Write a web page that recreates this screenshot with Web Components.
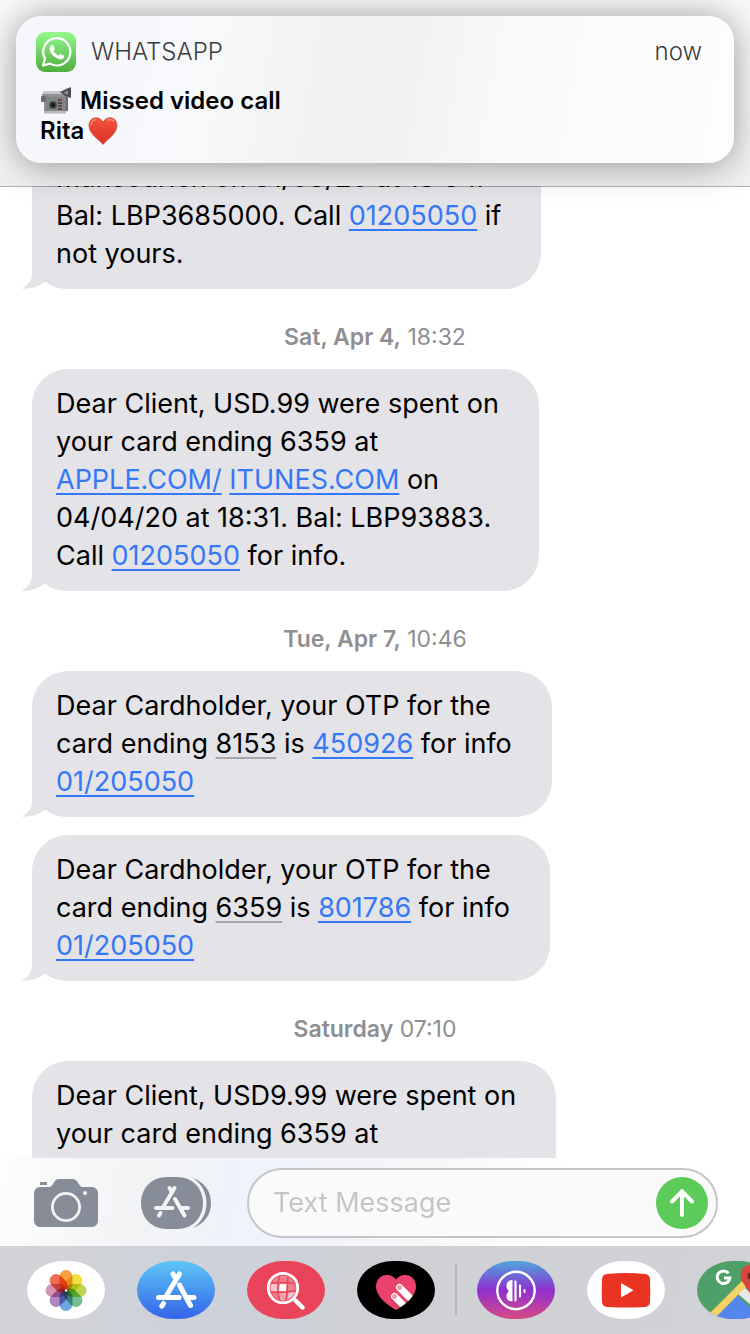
<!DOCTYPE html>
<html lang="en">
<head>
<meta charset="utf-8">
<meta name="viewport" content="width=device-width, initial-scale=1">
<title>Messages</title>
<style>
  html, body {
    margin: 0;
    height: 100%;
    overflow: hidden;
    background: #fff;
    font-family: Inter, "Liberation Sans", sans-serif;
  }
</style>
</head>
<body>

<message-screen>
  <app-banner slot="banner" app="WHATSAPP" time="now">
    <missed-call></missed-call>
  </app-banner>

  <message-bubble>
    Mansourieh on 31/03/20 at 18:34.<br>
    Bal: LBP3685000. Call <message-link href="tel:01205050">01205050</message-link> if<br>
    not yours.
  </message-bubble>

  <date-label day="Sat, Apr 4,">18:32</date-label>
  <message-bubble>
    Dear Client, USD.99 were spent on<br>
    your card ending 6359 at<br>
    <message-link href="#apple">APPLE.COM/</message-link> <message-link href="#itunes">ITUNES.COM</message-link> on<br>
    04/04/20 at 18:31. Bal: LBP93883.<br>
    Call <message-link href="tel:01205050">01205050</message-link> for info.
  </message-bubble>

  <date-label day="Tue, Apr 7,">10:46</date-label>
  <message-bubble>
    Dear Cardholder, your OTP for the<br>
    card ending <message-link muted href="#code">8153</message-link> is <message-link href="#code">450926</message-link> for info<br>
    <message-link href="tel:01205050">01/205050</message-link>
  </message-bubble>
  <message-bubble follows>
    Dear Cardholder, your OTP for the<br>
    card ending <message-link muted href="#code">6359</message-link> is <message-link href="#code">801786</message-link> for info<br>
    <message-link href="tel:01205050">01/205050</message-link>
  </message-bubble>

  <date-label day="Saturday">07:10</date-label>
  <message-bubble>
    Dear Client, USD9.99 were spent on<br>
    your card ending 6359 at<br>
    <br>
  </message-bubble>

  <message-composer slot="footer"></message-composer>
  <app-drawer slot="footer"></app-drawer>
</message-screen>

<script>
// Small helper: every element gets an open shadow root with its own markup
class BaseElement extends HTMLElement {
  constructor() {
    super();
    this.attachShadow({ mode: 'open' });
  }

  connectedCallback() {
    this.shadowRoot.innerHTML = this.render();
  }
}

class MessageScreen extends BaseElement {
  render() {
    return `
      <style>
        :host {
          position: relative;
          display: flex;
          flex-direction: column;
          height: 100vh;
          overflow: hidden;
        }
        /* the bar floats over the scrolled thread */
        header {
          position: absolute;
          inset: 0 0 auto 0;
          z-index: 1;
          box-sizing: border-box;
          height: 187px;
          padding: 16px;
          background: linear-gradient(#f9f9f9 60%, #f0f0f0);
          background-clip: padding-box;
          border-bottom: 1px solid rgba(0, 0, 0, .3);
        }
        main {
          flex: 1;
          min-height: 0;
          overflow: hidden;
          display: flex;
          flex-direction: column;
          padding: 143px 32px 0;
        }
        footer { position: relative; z-index: 2; }
      </style>
      <header><slot name="banner"></slot></header>
      <main><slot></slot></main>
      <footer><slot name="footer"></slot></footer>
    `;
  }
}

class AppBanner extends BaseElement {
  render() {
    return `
      <style>
        :host {
          display: block;
          box-sizing: border-box;
          height: 147px;
          padding: 16px 32px 16px 20px;
          border-radius: 26px;
          background: linear-gradient(100deg, #f6f7fc 0%, #f7f8fa 28%, #f0f1f3 46%, #f1f2f4 54%, #f9f9fa 68%, #fcfdfd 100%);
          box-shadow: 0 2px 36px rgba(0, 0, 0, .4);
        }
        .head {
          display: flex;
          align-items: center;
          gap: 15px;
          font-size: 24px;
          font-weight: 300;
          line-height: 40px;
          color: #3c3c3e;
        }
        svg { display: block; }
        time { margin-left: auto; color: #3c3c3e; }
        .body { padding: 14px 4px 0; }
      </style>
      <div class="head">
        <svg width="40" height="40" viewBox="0 0 40 40" aria-hidden="true">
          <defs>
            <linearGradient id="wa" x1="0" y1="0" x2="0" y2="1">
              <stop offset="0" stop-color="#92fa8c"/>
              <stop offset="1" stop-color="#4fae3f"/>
            </linearGradient>
          </defs>
          <rect width="40" height="40" rx="9" fill="url(#wa)"/>
          <path d="M7 33.500 L9 26.600 A13.600 13.600 0 1 1 14 31.600 Z" fill="none" stroke="#fff" stroke-width="2.200" stroke-linejoin="round"/>
          <path d="M15.200 13.200c.5-.5 1.700-.6 2 .1l1.500 3.300c.3.800-1 1.900-1 2.500 1 2 2.600 3.400 4.600 4.300.8.200 1.600-1.800 2.300-1.500l3.100 1.500c.8.400.5 1.800-.1 2.600-1.200 1.300-3.200 1.500-4.900.9-4.500-1.500-7.400-4.500-8.700-8-.6-2.200-.1-4.400 1.200-5.700z" fill="#fff"/>
        </svg>
        <span>${this.getAttribute('app')}</span>
        <time>${this.getAttribute('time')}</time>
      </div>
      <div class="body"><slot></slot></div>
    `;
  }
}

class MissedCall extends BaseElement {
  render() {
    return `
      <style>
        :host {
          display: block;
          font-size: 24px;
          font-weight: 600;
          line-height: 30px;
          color: #000;
        }
        div { display: flex; align-items: center; }
        .title { gap: 8px; }
        .name { gap: 4px; }
      </style>
      <div class="title">
        <svg width="32" height="28" viewBox="0 0 32 28" role="img" aria-label="Movie camera">
          <path d="M3 4h19l6-3 2 1v8l-3-1-1 17H4V15H2V7h1z" fill="#8f9193"/>
          <path d="M3 4h19l4-2-1 5H3z" fill="#c3c5c7"/>
          <path d="M20 5l11-5v11l-6-2z" fill="#4c4d50"/>
          <path d="M23 6l5-2.500v4z" fill="#909294"/>
          <rect x="1" y="9" width="5" height="6" rx="1" fill="#696b6e"/>
          <rect x="6" y="10" width="20" height="14" fill="#808285"/>
          <rect x="4" y="24" width="22" height="2.500" fill="#b8b9bb"/>
          <circle cx="13" cy="18" r="4" fill="#515356"/>
          <circle cx="13" cy="18" r="2.500" fill="#1d1e20"/>
          <path d="M18 13h4M18 16h4M18 19h4M18 22h4" stroke="#3c3d3f" stroke-width="1.500"/>
          <path d="M20 13h1.500M20 19h1.500" stroke="#b0433e" stroke-width="1.500"/>
          <path d="M27 10v14" stroke="#6a6c6f" stroke-width="2"/>
        </svg>
        <span>Missed video call</span>
      </div>
      <div class="name">
        <span>Rita</span>
        <svg width="30" height="28" viewBox="0 0 30 28" role="img" aria-label="Red heart">
          <defs>
            <linearGradient id="ht" x1="0" y1="0" x2="0" y2="1">
              <stop offset="0" stop-color="#f3533d"/>
              <stop offset="1" stop-color="#d93226"/>
            </linearGradient>
          </defs>
          <path d="M15 27.500C13 24 1 17.500 1 8.500 1 4 4 .7 8 .7c3.300 0 5.800 2 7 4.600C16.200 2.700 18.700.7 22 .7c4 0 7 3.300 7 7.800C29 17.500 17 24 15 27.500z" fill="url(#ht)" stroke="#c9342a" stroke-width=".6"/>
          <path d="M3 8.500C3 5 5.300 2.700 8 2.700M19 3.500C21 2.200 24 2.500 26 4.500" fill="none" stroke="#ffa28f" stroke-width="1.600" opacity=".7"/>
        </svg>
      </div>
    `;
  }
}

class MessageBubble extends BaseElement {
  render() {
    return `
      <style>
        :host {
          position: relative;
          isolation: isolate;
          display: block;
          flex: none;
          align-self: flex-start;
          padding: 16px 40px 16px 24px;
          border-radius: 36px;
          background: #e4e3e8;
          color: #000;
          font-size: 27px;
          line-height: 38px;
          white-space: nowrap;
        }
        :host([follows]) { margin-top: 18px; }
        /* tail sits behind the text */
        svg {
          position: absolute;
          left: -11px;
          bottom: 0;
          z-index: -1;
        }
      </style>
      <slot></slot>
      <svg width="50" height="36" viewBox="0 0 50 36" fill="#e4e3e8" aria-hidden="true">
        <path d="M11 0V19C11 27 7 33.500 0 35.600C9 36.500 19 33 24 28.500C30 33.500 38 36 49 36V0Z"/>
      </svg>
    `;
  }
}

class MessageLink extends BaseElement {
  render() {
    return `
      <style>
        :host { display: inline; }
        a {
          color: #3478f6;
          text-decoration: underline;
          text-decoration-thickness: 2px;
          text-underline-offset: 4px;
        }
        :host([muted]) a {
          color: #000;
          text-decoration-color: #a6a6aa;
        }
      </style><a href="${this.getAttribute('href')}"><slot></slot></a>`;
  }
}

class DateLabel extends BaseElement {
  render() {
    return `
      <style>
        :host {
          display: block;
          flex: none;
          padding: 33px 0 17px;
          font-size: 23px;
          line-height: 30px;
          text-align: center;
          color: #8e8e93;
        }
        b { font-weight: 600; }
      </style>
      <b>${this.getAttribute('day')}</b> <slot></slot>
    `;
  }
}

class MessageComposer extends BaseElement {
  render() {
    return `
      <style>
        :host {
          display: flex;
          align-items: center;
          padding: 10px 32px 8px 34px;
          background: linear-gradient(100deg, #fdfdfd 0%, #f2f3f5 20%, #eff3fb 34%, #f6f6f8 55%, #fff 75%);
        }
        button {
          display: block;
          flex: none;
          padding: 0;
          border: 0;
          background: none;
        }
        svg { display: block; }
        .camera { margin-right: 43px; }
        .apps { margin-right: 36px; }
        .field {
          flex: 1;
          min-width: 0;
          box-sizing: border-box;
          display: flex;
          align-items: center;
          height: 70px;
          padding: 0 8px 0 24px;
          border: 2px solid #c5c5cb;
          border-radius: 35px;
          background: #fafafa;
        }
        input {
          flex: 1;
          min-width: 0;
          padding: 0;
          border: 0;
          outline: 0;
          background: none;
          font: inherit;
          font-size: 27px;
          line-height: 38px;
          color: #000;
        }
        input::placeholder { color: #c5c5c9; opacity: 1; }
      </style>
      <button class="camera" aria-label="Camera">
        <svg width="64" height="48" viewBox="0 0 64 48" fill="#868c98">
          <path d="M6 3h7v3H6z"/>
          <path d="M6 8h9c5 0 4-8 10-8h13c7 0 6 8 11 8h9a6 6 0 0 1 6 6v28a6 6 0 0 1-6 6H6a6 6 0 0 1-6-6V14a6 6 0 0 1 6-6z"/>
          <circle cx="32" cy="28" r="13.600" fill="none" stroke="#f4f4f5" stroke-width="2.800"/>
          <circle cx="51" cy="14" r="2" fill="#f4f4f5"/>
        </svg>
      </button>
      <button class="apps" aria-label="Apps">
        <svg width="70" height="52" viewBox="0 0 70 52" fill="#868c98">
          <path d="M26 0h10C52 0 62 12 62 26S52 52 36 52H26C10 52 0 40 0 26S10 0 26 0z"/>
          <path d="M52 1C63 5 70 14 70 26s-7 21-18 25c9-6 13.500-15 13.500-25S61 7 52 1z"/>
          <g stroke="#f4f4f5" stroke-width="4" stroke-linecap="round">
            <path d="M28.500 11L31 15.500M33.500 11L22.500 29.500M15 31H31.500M41 31H47M34 22L43.500 38.500M19.500 36L18 38.500"/>
          </g>
        </svg>
      </button>
      <div class="field">
        <input type="text" placeholder="Text Message" aria-label="Text Message">
        <button aria-label="Send">
          <svg width="52" height="52" viewBox="0 0 52 52">
            <circle cx="26" cy="26" r="26" fill="#5dcb5a"/>
            <path d="M26 38V14M16 24.500L26 14.300l10 10.200" fill="none" stroke="#fff" stroke-width="4" stroke-linecap="round" stroke-linejoin="round"/>
          </svg>
        </button>
      </div>
    `;
  }
}

class AppDrawer extends BaseElement {
  // Artwork for each app, all on a 78x58 canvas
  get apps() {
    const petals = ['#f2962b', '#f0dc2e', '#b6d33d', '#67b983', '#5f9fdb', '#a679b8', '#d387ad', '#ee5b42'];
    return [
      ['Photos', '#fff', petals.map((c, i) =>
        `<rect x="32.500" y="9" width="13" height="20.500" rx="6.500" fill="${c}" opacity=".9" transform="rotate(${i * 45} 39 29.500)" style="mix-blend-mode: multiply"/>`
      ).join('') + '<circle cx="39" cy="29.500" r="1.200" fill="#fff"/>'],

      ['App Store', 'linear-gradient(#5dc6f6, #3463e8)', `
        <g stroke="#fff" stroke-width="5" stroke-linecap="round">
          <path d="M36 13L39 18M42.500 13L29.500 34.500M21.500 36.500H42M50 36.500H57M42.500 24L53.500 44.500M26.500 42.500L24.800 45.200"/>
        </g>`],

      ['Images', '#ea445a', `
        <defs><clipPath id="lens"><circle cx="36" cy="27" r="12.500"/></clipPath></defs>
        <g clip-path="url(#lens)">
          <rect x="22" y="13" width="28" height="28" fill="#f0808f"/>
          <path d="M22 23h10v7H22zM40 30h10v12H39z" fill="#f9c3ca"/>
          <path d="M32 30h8l-1 12h-8z" fill="#f4a3ae"/>
          <path d="M33 23h7l-1 7h-7z" fill="#fff"/>
          <path d="M22 22.500C31 21 40 21 50 23M22 31C31 32 40 31 50 30M33 13C30 22 30 31 33 41M42 13C38 22 43 31 38 41" fill="none" stroke="#ea445a" stroke-width="1.600"/>
        </g>
        <circle cx="36" cy="27" r="14.700" fill="none" stroke="#fff" stroke-width="2.800"/>
        <path d="M46 37L49 40" stroke="#fff" stroke-width="3"/>
        <path d="M49 40L55.500 46.500" stroke="#fff" stroke-width="4.500" stroke-linecap="round"/>`],

      ['Digital Touch', '#000', `
        <defs><clipPath id="heart"><path id="hp" d="M39 49C32 45 19 36 19 25.500 19 18.500 24 14 29.500 14c4.500 0 7.800 2 9.500 4.500C40.700 16 44 14 48.500 14 54 14 59 18.500 59 25.500 59 36 46 45 39 49z"/></clipPath></defs>
        <use href="#hp" fill="#e9436b"/>
        <g clip-path="url(#heart)" stroke-linecap="round">
          <path d="M37.500 37L52 51" stroke="#b82a50" stroke-width="8" opacity=".5"/>
          <path d="M42.500 26.500L59 43M37.500 35.500L54 52" stroke="#fff" stroke-width="7"/>
          <circle cx="42.500" cy="26.500" r="2.500" fill="#f29ab0"/>
          <circle cx="37.500" cy="35.500" r="2.500" fill="#f29ab0"/>
        </g>`],

      null,

      ['Music', 'linear-gradient(#4ea6dc, #8e30cf 50%, #d84a86)', `
        <circle cx="39" cy="29.500" r="18.700" fill="none" stroke="#fff" stroke-width="2.400"/>
        <path d="M35.500 19v21.500c-3.500 0-6-1.500-6-5.500 0-2 .8-3.300 2.300-4.800-1.500-1.500-2.300-3-2.300-5.200 0-4 2.500-6 6-6z" fill="#fff"/>
        <g stroke="#fff" stroke-width="2.200" stroke-linecap="round"><path d="M38.500 20.500v19M43 24.500v11M47.500 29v2"/></g>`],

      ['YouTube', '#fff', `
        <path d="M20 13Q39 11 58 13Q62.500 13.500 63 18Q63.500 29.500 63 41Q62.500 45.500 58 46Q39 47 20 46Q15.500 45.500 15 41Q14.500 29.500 15 18Q15.500 13.500 20 13z" fill="#e93323"/>
        <path d="M34 22v14.500l12.500-7.200z" fill="#fff"/>`],

      ['Google Maps', '#4f9f68', `
        <path d="M40 32L46 25l32 30v10z" fill="#e8e9eb"/>
        <path d="M40 34L78 72H0z" fill="#5585ee"/>
        <path d="M47 20h31v38z" fill="#c9cbd0"/>
        <path d="M12 58L48 22" stroke="#f7d163" stroke-width="7"/>
        <path d="M31.500 12.300a6.300 6.300 0 1 0 1.300 4.700H27" fill="none" stroke="#fff" stroke-width="3"/>
        <path d="M54 36C52 27 43.500 22 43.500 14a10.500 10.500 0 0 1 21 0C64.500 22 56 27 54 36z" fill="#d6483c"/>
        <circle cx="54" cy="15" r="3.500" fill="#6f1d19"/>`],
    ];
  }

  render() {
    const items = this.apps.map(app => {
      if (!app) return '<hr>';
      const [name, background, art] = app;
      return `<button aria-label="${name}" style="background: ${background}"><svg width="78" height="58" viewBox="0 0 78 58">${art}</svg></button>`;
    });

    return `
      <style>
        :host {
          display: flex;
          align-items: center;
          gap: 32px;
          height: 88px;
          padding-left: 27px;
          overflow: hidden;
          background: linear-gradient(100deg, #d3d4d7 0%, #cdd1da 30%, #d0d1d5 55%, #d1d2d7 100%);
        }
        button {
          flex: none;
          width: 78px;
          height: 58px;
          padding: 0;
          border: 0;
          border-radius: 36px / 29px;
          overflow: hidden;
        }
        svg { display: block; }
        hr {
          flex: none;
          width: 2px;
          height: 50px;
          margin: 0 -12px;
          border: 0;
          background: #b3b4b9;
        }
      </style>
      ${items.join('')}
    `;
  }
}

customElements.define('message-link', MessageLink);
customElements.define('message-bubble', MessageBubble);
customElements.define('date-label', DateLabel);
customElements.define('missed-call', MissedCall);
customElements.define('app-banner', AppBanner);
customElements.define('message-composer', MessageComposer);
customElements.define('app-drawer', AppDrawer);
customElements.define('message-screen', MessageScreen);
</script>
</body>
</html>
